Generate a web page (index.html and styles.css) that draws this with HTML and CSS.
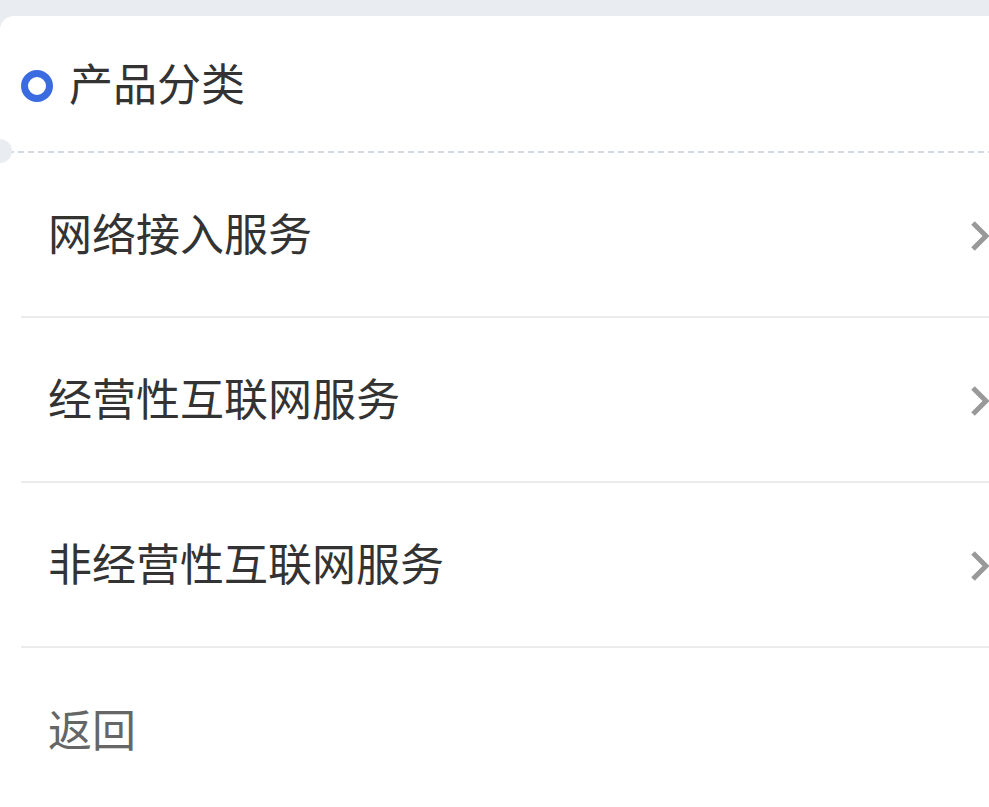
FILE: index.html
```html
<!DOCTYPE html>
<html lang="zh-CN">
<head>
  <meta charset="UTF-8">
  <title>产品分类</title>
  <link rel="stylesheet" href="styles.css">
</head>
<body>
  <div class="page">
    <div class="card">
      <div class="card-head">
        <svg class="ring" width="32" height="32" viewBox="0 0 32 32">
          <circle cx="16" cy="16" r="12.5" fill="none" stroke="#3b6be0" stroke-width="7"/>
        </svg>
        <h2 class="title">产品分类</h2>
      </div>
      <div class="dash-line"></div>

      <ul class="menu">
        <li class="menu-item">
          <span>网络接入服务</span>
          <svg class="chevron" width="24" height="32" viewBox="0 0 24 32">
            <path d="M4 3 L17 16 L4 29" fill="none" stroke="#999" stroke-width="5"/>
          </svg>
        </li>
        <li class="menu-item">
          <span>经营性互联网服务</span>
          <svg class="chevron" width="24" height="32" viewBox="0 0 24 32">
            <path d="M4 3 L17 16 L4 29" fill="none" stroke="#999" stroke-width="5"/>
          </svg>
        </li>
        <li class="menu-item">
          <span>非经营性互联网服务</span>
          <svg class="chevron" width="24" height="32" viewBox="0 0 24 32">
            <path d="M4 3 L17 16 L4 29" fill="none" stroke="#999" stroke-width="5"/>
          </svg>
        </li>
        <li class="menu-item back">
          <span>返回</span>
        </li>
      </ul>
    </div>
  </div>
</body>
</html>
```

FILE: styles.css
```css
* {
  margin: 0;
  padding: 0;
  box-sizing: border-box;
  font-family: "Noto Sans CJK SC", "Noto Sans", sans-serif;
}

html, body {
  height: 100%;
  background-color: #e9ecf1;
  overflow: hidden;
}

.page {
  padding-top: 16px;
}

.card {
  position: relative;
  width: calc(100% + 20px);
  min-height: 820px;
  background: #fff;
  border-radius: 14px 14px 0 0;
}

.card-head {
  height: 135px;
  display: flex;
  align-items: center;
  gap: 16px;
  padding-left: 21px;
  padding-top: 4px;
}

.title {
  font-size: 44px;
  font-weight: normal;
  color: #333;
  line-height: 1;
  margin-bottom: 8px;
}

.dash-line {
  position: relative;
  height: 2px;
  margin-left: 8px;
  background: repeating-linear-gradient(to right, #d3d9e0 0, #d3d9e0 6px, transparent 6px, transparent 10px);
}

/* ticket notch on the left */
.dash-line::before {
  content: "";
  position: absolute;
  left: -20px;
  top: -12px;
  width: 24px;
  height: 24px;
  border-radius: 50%;
  background: #e9ecf1;
}

.menu {
  list-style: none;
  margin-left: 21px;
}

.menu-item {
  height: 165px;
  display: flex;
  align-items: center;
  justify-content: space-between;
  padding-left: 27px;
  padding-right: 16px;
  border-bottom: 2px solid #ebebeb;
  font-size: 44px;
  color: #333;
}

.menu-item span {
  margin-bottom: 6px;
}

.menu-item .chevron {
  margin-top: 2px;
}

.menu-item.back {
  color: #666;
  border-bottom: none;
}
```
